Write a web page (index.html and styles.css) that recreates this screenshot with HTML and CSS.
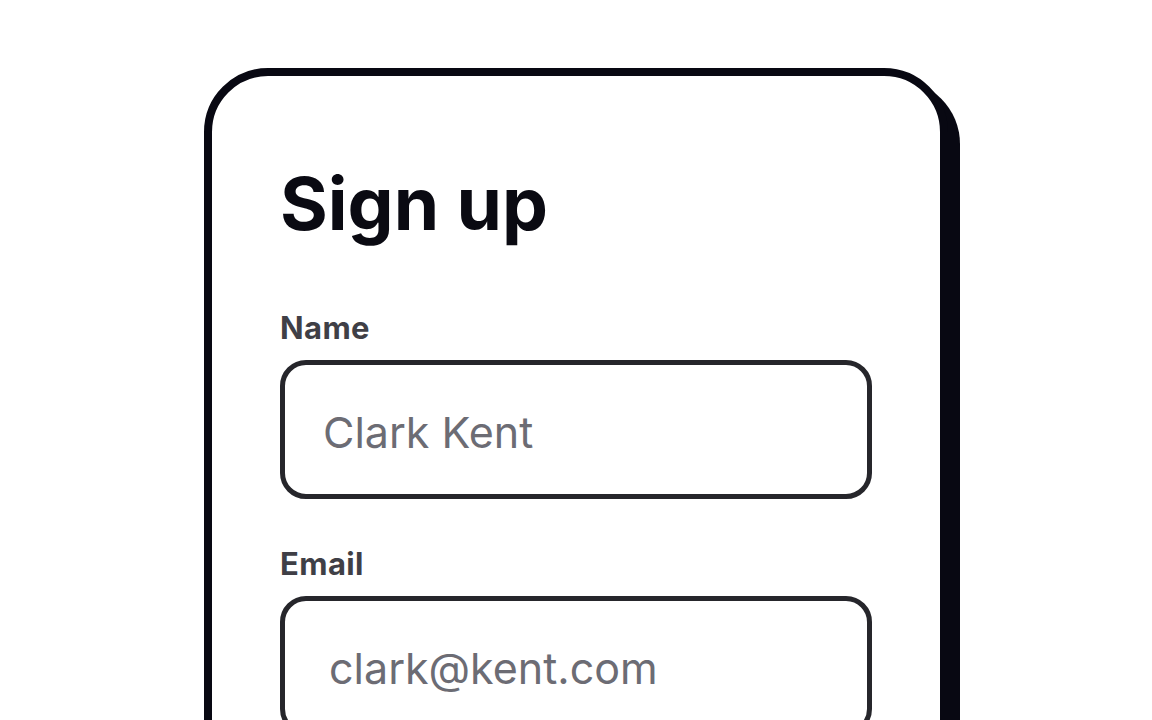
FILE: index.html
```html
<!DOCTYPE html>
<html lang="en">
<head>
<meta charset="utf-8">
<title>Sign up</title>
<link rel="stylesheet" href="styles.css">
</head>
<body>
<main class="page">
  <section class="card">
    <h1 class="title">Sign up</h1>
    <form class="form">
      <label class="field">
        <span class="label">Name</span>
        <input class="input input-name" type="text" placeholder="Clark Kent">
      </label>
      <label class="field">
        <span class="label">Email</span>
        <input class="input input-email" type="email" placeholder="clark@kent.com">
      </label>
    </form>
  </section>
</main>
</body>
</html>
```
FILE: styles.css
```css
html, body {
  margin: 0;
  padding: 0;
  background: #ffffff;
}
body {
  font-family: Inter, "Noto Sans", sans-serif;
  overflow: hidden;
  height: 720px;
}
.page {
  display: flex;
  justify-content: center;
  padding-top: 68px;
}
.card {
  box-sizing: border-box;
  width: 744px;
  min-height: 820px;
  border: 8px solid #080812;
  border-radius: 64px;
  box-shadow: 12px 12px 0 #080812;
  padding: 92px 68px 68px;
  background: #fff;
}
.title {
  margin: 0;
  font-size: 73px;
  line-height: 72px;
  font-weight: 700;
  color: #0a0a12;
}
.form {
  display: flex;
  flex-direction: column;
  gap: 47px;
  margin-top: 70px;
}
.field {
  display: flex;
  flex-direction: column;
  gap: 14px;
}
.label {
  font-size: 31px;
  line-height: 36px;
  font-weight: 700;
  letter-spacing: 0.4px;
  color: #3f3f46;
}
.input {
  box-sizing: border-box;
  width: 100%;
  height: 139px;
  border: 5px solid #26262b;
  border-radius: 26px;
  background: #fff;
  font-family: Inter, "Noto Sans", sans-serif;
  font-size: 43px;
  color: #27272a;
  outline: none;
  padding: 4px 38px 0;
}
.input-email {
  padding-left: 44px;
}
.input::placeholder {
  color: #6c6c74;
  opacity: 1;
}
```
